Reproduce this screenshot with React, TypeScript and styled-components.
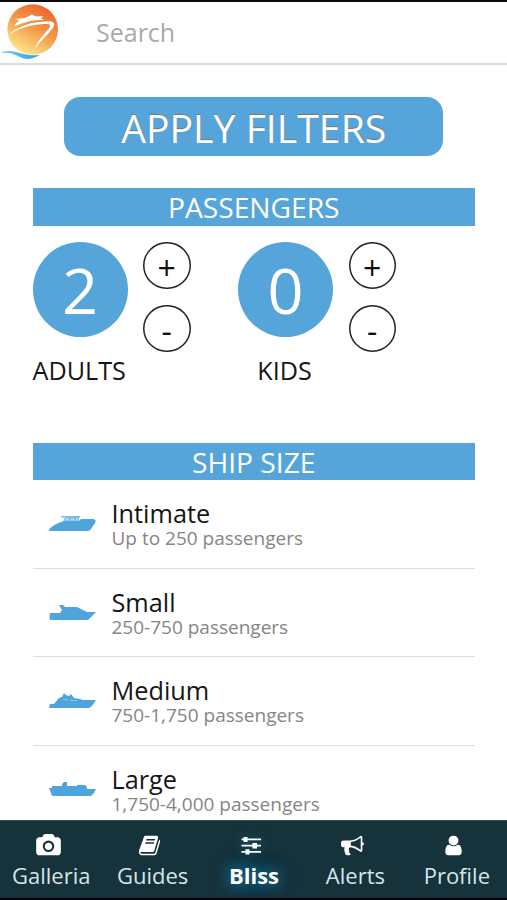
import React, { useState } from "react";
import styled, { createGlobalStyle, css } from "styled-components";

const blue = "#56a5da";

const GlobalStyle = createGlobalStyle`
  *, *::before, *::after { box-sizing: border-box; }
  html, body { margin: 0; padding: 0; overflow: hidden; }
  body { font-family: "Open Sans", "Noto Sans", sans-serif; color: #161616; background: #fff; }
  button, input { font: inherit; color: inherit; }
`;

const Screen = styled.div`
  display: flex;
  flex-direction: column;
  width: 507px;
  height: 900px;
  border-top: 2px solid #0b0a0d;
  border-bottom: 2px solid #000;
  background: #fff;
  overflow: hidden;
`;

const Header = styled.header`
  display: flex;
  flex: none;
  height: 63px;
  border-bottom: 2px solid #dcdcdc;
`;

const Logo = styled.svg`
  width: 64px;
  height: 61px;
  flex: none;
`;

const SearchInput = styled.input`
  flex: 1;
  min-width: 0;
  height: 59px;
  padding: 0 0 0 32px;
  border: 0;
  outline: 0;
  background: transparent;
  font-size: 25px;
  &::placeholder { color: #aaa; opacity: 1; }
`;

const Content = styled.main`
  display: flex;
  flex-direction: column;
  flex: 1;
  min-height: 0;
  padding: 31.5px 32px 0 32.5px;
  overflow: hidden;
`;

const ApplyButton = styled.button`
  flex: none;
  align-self: center;
  width: 379px;
  height: 59.5px;
  margin-bottom: 32px;
  padding: 0;
  border: 0;
  border-radius: 16px;
  background: ${blue};
  color: #fff;
  font-size: 39.2px;
  line-height: 61px;
  text-shadow: 0 -1px 1px #777;
`;

const SectionTitle = styled.h2`
  flex: none;
  height: 37.5px;
  margin: 0;
  background: ${blue};
  color: #fff;
  font-size: 28.2px;
  font-weight: 400;
  line-height: 39px;
  text-align: center;
`;

const Passengers = styled.div`
  display: flex;
  flex: none;
  height: 217px;
  padding-top: 16px;
  gap: 47px;
`;

const Counter = styled.div`
  display: grid;
  grid-template-columns: 95px 48px;
  grid-template-rows: 110px 36px;
  column-gap: 15.5px;
`;

const Count = styled.output`
  width: 95px;
  height: 95px;
  border-radius: 50%;
  background: ${blue};
  color: #fff;
  font-size: 63px;
  line-height: 95px;
  text-align: center;
`;

const Steps = styled.div`
  display: flex;
  flex-direction: column;
  gap: 15.5px;
`;

const StepButton = styled.button`
  flex: none;
  width: 47.5px;
  height: 47.5px;
  padding: 0;
  border: 0;
  border-radius: 50%;
  background: #fff;
  box-shadow: inset 0 0 0 1.5px #222;
  color: #111;
  font-size: 32px;
  font-weight: 500;
  line-height: 52px;
`;

const CounterLabel = styled.div`
  padding-right: 2px;
  font-size: 25.2px;
  line-height: 36px;
  text-align: center;
  white-space: nowrap;
`;

const ShipList = styled.ul`
  flex: none;
  margin: 0;
  padding: 0;
  list-style: none;
`;

const ShipRow = styled.li`
  display: flex;
  height: 88.5px;
  padding: 19px 0 0 16px;
  border-bottom: 1.5px solid #ddd;
`;

const ShipIcon = styled.svg`
  flex: none;
  width: 47px;
  height: 20px;
  margin: 14px 16px 0 0;
  fill: #4fa4dc;
`;

const ShipName = styled.div`
  font-size: 25.3px;
  line-height: 29px;
`;

const ShipRange = styled.div`
  color: #858585;
  font-size: 19px;
  line-height: 20px;
`;

const TabBar = styled.nav`
  display: flex;
  flex: none;
  height: 78px;
  border-top: 1px solid #315052;
  background: #16323b;
`;

const Tab = styled.button<{ $active?: boolean }>`
  display: flex;
  flex: 1 1 0;
  flex-direction: column;
  align-items: center;
  justify-content: flex-start;
  min-width: 0;
  padding: 13px 0 0 1px;
  border: 0;
  background: transparent;
  color: #d5e4eb;
  font-size: 22px;
  line-height: 30px;
  ${({ $active }) => $active && css`
    color: #fff;
    font-weight: 700;
    text-shadow: 0 0 14px #147ca4, 0 0 20px #127da5;
  `}
`;

const TabIcon = styled.svg<{ $glow?: boolean }>`
  flex: none;
  width: 25px;
  height: 23px;
  margin: 0 6px 3px 0;
  fill: #fff;
  ${({ $glow }) => $glow && css`filter: drop-shadow(0 0 6px #105a78);`}
`;

const ships = [
  {
    name: "Intimate",
    range: "Up to 250 passengers",
    art: <><path d="M0 16.5C4 12 9 10 15 8H30L32 6H44Q48 6 46 10L42 16Q41 18 38 18H1Q0 18 0 16.5Z" /><path d="M12 3H31V4.5H30V8H14L16 4.5H12Z" opacity=".72" /><path d="M17 5.5h3v2h-3zM22 5.5h3v2h-3zM27 5.5h2v2h-2z" fill="#b9def2" /></>,
  },
  {
    name: "Small",
    range: "250-750 passengers",
    art: <path d="M1 18Q0 14 1 11H11L13 8L10 3L14 3L16 5H28L34 8L38 10H47L42 15L39 18Z" />,
  },
  {
    name: "Medium",
    range: "750-1,750 passengers",
    art: <><path d="M0 18L1 14H5L10 8L13 7L15 3L17 5L20 6L22 4L25 8L31 9L34 10H47L43 16L40 18Z" /><path d="M14 9h5v.7h-5zM21 10h7v.7h-7z" fill="#9bcdeb" /></>,
  },
  {
    name: "Large",
    range: "1,750-4,000 passengers",
    art: <path d="M0 9H3V7H13V5L15 3H18V7H28V6H36L38 8V10H47L45 14L42 17H5Q2 17 2 14Z" />,
  },
];

const tabs = [
  { label: "Galleria", viewBox: "0 0 1920 1792", d: "M960 672q119 0 203.5 84.5t84.5 203.5-84.5 203.5-203.5 84.5-203.5-84.5-84.5-203.5 84.5-203.5 203.5-84.5zm704-416q106 0 181 75t75 181v896q0 106-75 181t-181 75h-1408q-106 0-181-75t-75-181v-896q0-106 75-181t181-75h224l51-136q19-49 69.5-84.5t103.5-35.5h512q53 0 103.5 35.5t69.5 84.5l51 136h224zm-704 1152q185 0 316.5-131.5t131.5-316.5-131.5-316.5-316.5-131.5-316.5 131.5-131.5 316.5 131.5 316.5 316.5 131.5z" },
  { label: "Guides", viewBox: "0 0 1792 1792", d: "M1703 478q40 57 18 129l-275 906q-19 64-76.5 107.5t-122.5 43.5h-923q-77 0-148.5-53.5t-99.5-131.5q-24-67-2-127 0-4 3-27t4-37q1-8-3-21.5t-3-19.5q2-11 8-21t16.5-23.5 16.5-23.5q23-38 45-91.5t30-91.5q3-10 .5-30t-.5-28q3-11 17-28t17-23q21-36 42-92t25-90q1-9-2.5-32t.5-28q4-13 22-30.5t22-22.5q19-26 42.5-84.5t27.5-96.5q1-8-3-25.5t-2-26.5q2-8 9-18t18-23 17-21q8-12 16.5-30.5t15-35 16-36 19.5-32 26.5-23.5 36-11.5 47.5 5.5l-1 3q38-9 51-9h761q74 0 114 56t18 130l-274 906q-36 119-71.5 153.5t-128.5 34.5h-869q-27 0-38 15-11 16-1 43 24 70 144 70h923q29 0 56-15.5t35-41.5l300-987q7-22 5-57 38 15 59 43zm-1064 2q-4 13 2 22.5t20 9.5h608q13 0 25.5-9.5t16.5-22.5l21-64q4-13-2-22.5t-20-9.5h-608q-13 0-25.5 9.5t-16.5 22.5zm-83 256q-4 13 2 22.5t20 9.5h608q13 0 25.5-9.5t16.5-22.5l21-64q4-13-2-22.5t-20-9.5h-608q-13 0-25.5 9.5t-16.5 22.5z" },
  { label: "Bliss", viewBox: "1 2 24 23", d: "M3 6.5H5V5H9V6.5H22.5V8.3H9V10H5V8.3H3ZM3 12.7H14V11H18.5V12.7H22.5V14.5H18.5V16.5H14V14.5H3ZM3 19H7V17.2H11V19H22.5V20.8H11V22.5H7V20.8H3Z" },
  { label: "Alerts", viewBox: "0 0 1792 1792", d: "M1664 640q53 0 90.5 37.5t37.5 90.5-37.5 90.5-90.5 37.5v384q0 52-38 90t-90 38q-417-347-812-380-58 19-91 66t-31 100.5 40 92.5q-20 33-23 65.5t6 58 33.5 55 48 50 61.5 50.5q-29 58-111.5 83t-168.5 11.5-132-55.5q-7-23-29.5-87.5t-32-94.5-23-89-15-101 3.5-98.5 22-110.5h-122q-66 0-113-47t-47-113v-192q0-66 47-113t113-47h480q435 0 896-384 52 0 90 38t38 90v384zm-128 604v-954q-394 302-768 343v270q377 42 768 341z" },
  { label: "Profile", viewBox: "0 0 1792 1792", d: "M1536 1399q0 109-62.5 187t-150.5 78h-854q-88 0-150.5-78t-62.5-187q0-85 8.5-160.5t31.5-152 58.5-131 94-89 134.5-34.5q131 128 313 128t313-128q76 0 134.5 34.5t94 89 58.5 131 31.5 152 8.5 160.5zm-256-887q0 159-112.5 271.5t-271.5 112.5-271.5-112.5-112.5-271.5 112.5-271.5 271.5-112.5 271.5 112.5 112.5 271.5z" },
];

function PassengerCounter({ label, initial }: { label: string; initial: number }) {
  const [count, setCount] = useState(initial);
  return (
    <Counter>
      <Count>{count}</Count>
      <Steps>
        <StepButton aria-label={`More ${label}`} onClick={() => setCount(count + 1)}>+</StepButton>
        <StepButton aria-label={`Fewer ${label}`} onClick={() => setCount(Math.max(0, count - 1))}>-</StepButton>
      </Steps>
      <CounterLabel>{label}</CounterLabel>
    </Counter>
  );
}

function ShipLogo() {
  return (
    <Logo viewBox="0 2 64 61" aria-label="Cruise ship logo">
      <defs>
        <linearGradient id="sun" x1=".75" y1=".1" x2=".3" y2=".95">
          <stop offset="0" stopColor="#ed692d" />
          <stop offset=".45" stopColor="#f39a48" />
          <stop offset="1" stopColor="#fee38a" />
        </linearGradient>
        <linearGradient id="sea">
          <stop offset="0" stopColor="#79cdf0" />
          <stop offset="1" stopColor="#269fe1" />
        </linearGradient>
      </defs>
      <circle cx="32.7" cy="29.5" r="25.3" fill="url(#sun)" />
      <path d="M8 35.5C17 26.5 31 21.8 47 21.3C54 21 56 23 52.5 28.5C47 36 40 41 35 48.5C37.5 40 45 34 49.5 27.5C51.5 24.5 49 23.7 44 24C29 25 17 29 8 35.5Z" fill="#fff" />
      <path d="M15 24.5L19 20.5L15 19L25 18L32 14.5L36 16.5L43 16L41 18.5L44 20C32 19.5 24 22.5 15 26Z" fill="#fff" />
      <path d="M2 52C14 48 23 57 40 55C30 60 25 60 18 56C12 53 8 52 2 53Z" fill="url(#sea)" />
    </Logo>
  );
}

export default function App() {
  return (
    <>
      <GlobalStyle />
      <Screen>
        <Header>
          <ShipLogo />
          <SearchInput placeholder="Search" />
        </Header>
        <Content>
          <ApplyButton>APPLY FILTERS</ApplyButton>
          <SectionTitle>PASSENGERS</SectionTitle>
          <Passengers>
            <PassengerCounter label="ADULTS" initial={2} />
            <PassengerCounter label="KIDS" initial={0} />
          </Passengers>
          <SectionTitle>SHIP SIZE</SectionTitle>
          <ShipList>
            {ships.map((ship) => (
              <ShipRow key={ship.name}>
                <ShipIcon viewBox="0 0 47 20">{ship.art}</ShipIcon>
                <div>
                  <ShipName>{ship.name}</ShipName>
                  <ShipRange>{ship.range}</ShipRange>
                </div>
              </ShipRow>
            ))}
          </ShipList>
        </Content>
        <TabBar>
          {tabs.map((tab) => (
            <Tab key={tab.label} $active={tab.label === "Bliss"}>
              <TabIcon viewBox={tab.viewBox} $glow={tab.label === "Bliss"}>
                <path d={tab.d} />
              </TabIcon>
              {tab.label}
            </Tab>
          ))}
        </TabBar>
      </Screen>
    </>
  );
}
